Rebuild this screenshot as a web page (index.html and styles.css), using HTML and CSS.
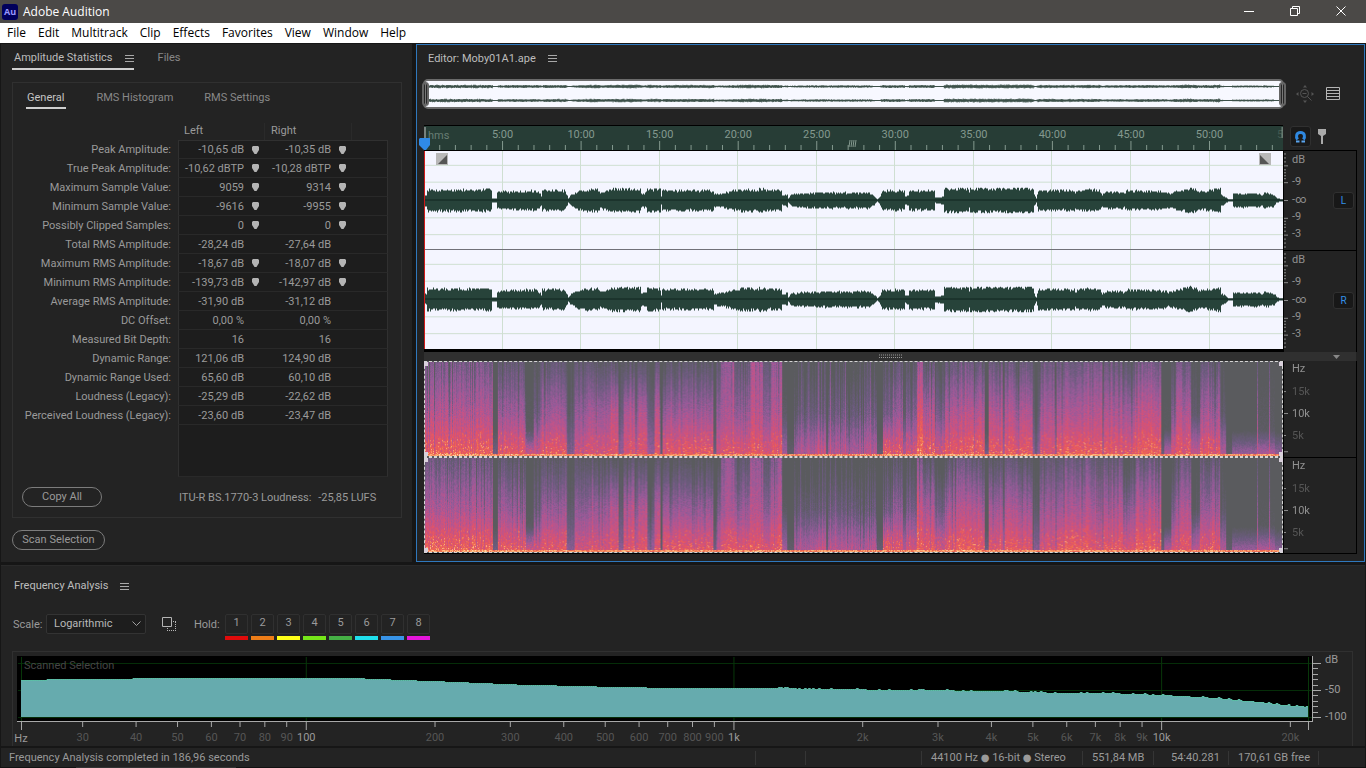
FILE: index.html
```html
<!DOCTYPE html>
<html lang="en">
<head>
<meta charset="utf-8">
<title>Adobe Audition</title>
<link rel="stylesheet" href="styles.css">
</head>
<body>
<div class="app">
  <header class="titlebar">
    <span class="logo">Au</span>
    <h1 class="app-name">Adobe Audition</h1>
    <div class="window-buttons">
      <button class="win" aria-label="Minimize"><svg width="12" height="12"><path d="M1 6.500h10"/></svg></button>
      <button class="win" aria-label="Restore"><svg width="12" height="12"><path d="M1.500 3.500h7v7h-7zM3.500 3.500v-2h7v7h-2"/></svg></button>
      <button class="win" aria-label="Close"><svg width="12" height="12"><path d="M1.500 1.500l9 9M10.500 1.500l-9 9"/></svg></button>
    </div>
  </header>
  <nav class="menubar">
    <button>File</button><button>Edit</button><button>Multitrack</button><button>Clip</button><button>Effects</button><button>Favorites</button><button>View</button><button>Window</button><button>Help</button>
  </nav>

  <main class="workspace">
    <section class="panel stats">
      <div class="tabs">
        <button class="tab active">Amplitude Statistics <svg class="burger" width="9" height="9"><path d="M0 1.500h9M0 4.500h9M0 7.500h9"/></svg></button>
        <button class="tab">Files</button>
      </div>
      <div class="card">
        <div class="subtabs">
          <button class="subtab active">General</button>
          <button class="subtab">RMS Histogram</button>
          <button class="subtab">RMS Settings</button>
        </div>
        <table class="stat-table">
          <thead><tr><td></td><th scope="col">Left</th><th scope="col">Right</th><td></td></tr></thead>
          <tbody id="stat-rows"></tbody>
        </table>
        <div class="card-foot">
          <button class="pill">Copy All</button>
          <p class="lufs">ITU-R BS.1770-3 Loudness: <span>-25,85 LUFS</span></p>
        </div>
      </div>
      <button class="pill scan">Scan Selection</button>
    </section>

    <section class="panel editor">
      <div class="panel-title">Editor: Moby01A1.ape <svg class="burger" width="9" height="9"><path d="M0 1.500h9M0 4.500h9M0 7.500h9"/></svg></div>
      <div class="editor-row overview-row">
        <div class="overview">
          <svg id="overview" viewBox="0 0 859 26" preserveAspectRatio="none"></svg>
          <i class="handle start"></i><i class="handle end"></i>
        </div>
        <div class="overview-tools">
          <svg width="18" height="18" class="zoomout"><circle cx="8.500" cy="8.500" r="4"/><path d="M6.500 8.500h4M11.500 11.500l4 4"/><path class="solid" d="M9 0l2 2.500H7zM9 18l2-2.500H7zM0 9l2.500-2v4zM18 9l-2.500-2v4z"/></svg>
          <svg width="15" height="14" class="listicon"><path d="M.5.5h13v12H.500zM.5 3.500h13M.5 6.500h13M.5 9.500h13"/></svg>
        </div>
      </div>
      <div class="editor-row">
        <div class="ruler">
          <svg id="ruler"></svg>
          <svg class="playhead" width="12" height="12"><path d="M1 0h10v7l-4 5H5L0 7V1z"/></svg>
        </div>
        <div class="ruler-tools">
          <button class="snap" aria-label="Snap"><svg width="13" height="13"><path d="M3.600 9.500C1.800 7 2 2.500 6.500 2.500s4.700 4.500 2.900 7"/><path class="foot" d="M2 11.500h3.500M7.500 11.500H11"/></svg></button>
          <svg width="8" height="15" class="pinicon"><path d="M0 0h8v5L5 7v8H3V7L0 5z"/></svg>
        </div>
      </div>
      <div class="editor-row wave-row">
        <div class="wave">
          <svg id="wave" viewBox="0 0 859 200" preserveAspectRatio="none"></svg>
          <svg class="fade in" width="12" height="12"><path class="tile" d="M0 0h12v12H0z"/><path d="M11 2v9H2z"/></svg>
          <svg class="fade out" width="12" height="12"><path class="tile" d="M0 0h12v12H0z"/><path d="M1 2v9h9z"/></svg>
        </div>
        <div class="scales">
          <div class="channel"><svg class="db-scale"></svg><button class="ch">L</button></div>
          <div class="channel"><svg class="db-scale"></svg><button class="ch">R</button></div>
        </div>
      </div>
      <div class="splitter">
        <svg class="grip" width="24" height="5"><path d="M1 1h23M1 3.500h23"/></svg>
        <svg class="caret" width="7" height="4"><path d="M0 0h7L3.500 4z"/></svg>
      </div>
      <div class="editor-row spectral-row">
        <div class="spectral">
          <div class="selection"><canvas class="spectrum" width="859" height="96"></canvas><i></i><i></i><i></i><i></i></div>
          <div class="selection"><canvas class="spectrum" width="859" height="96"></canvas><i></i><i></i><i></i><i></i></div>
        </div>
        <div class="scales">
          <div class="channel"><svg class="hz-scale"></svg></div>
          <div class="channel"><svg class="hz-scale"></svg></div>
        </div>
      </div>
    </section>
  </main>

  <section class="panel frequency">
    <div class="panel-title">Frequency Analysis <svg class="burger" width="9" height="9"><path d="M0 1.500h9M0 4.500h9M0 7.500h9"/></svg></div>
    <div class="controls">
      <label for="scale">Scale:</label>
      <div class="select-wrap">
        <select id="scale"><option>Logarithmic</option><option>Linear</option></select>
        <svg class="chevron" width="9" height="6"><path d="M.5.500l4 4 4-4"/></svg>
      </div>
      <button class="copy" aria-label="Copy graph"><svg width="15" height="15"><path d="M.5.500h9v9H.500z"/><path class="dots" d="M11 4.500h3M13.500 5v9M5 13.500h9M5.500 11v3"/></svg></button>
      <span class="hold-label">Hold:</span>
      <div class="holds">
        <button class="hold red">1</button><button class="hold orange">2</button><button class="hold yellow">3</button><button class="hold lime">4</button><button class="hold green">5</button><button class="hold cyan">6</button><button class="hold blue">7</button><button class="hold pink">8</button>
      </div>
    </div>
    <div class="graph-box">
      <div class="graph">
        <svg id="freq" viewBox="0 0 1296 65" preserveAspectRatio="none"></svg>
        <span class="scan-label">Scanned Selection</span>
      </div>
      <svg id="freq-db"></svg>
      <svg id="freq-axis"></svg>
    </div>
  </section>

  <footer class="statusbar">
    <span class="message">Frequency Analysis completed in 186,96 seconds</span>
    <span class="cell c-empty"></span>
    <span class="cell c-empty2"></span>
    <span class="cell c-format">44100 Hz <b>●</b> 16-bit <b>●</b> Stereo</span>
    <span class="cell c-size">551,84 MB</span>
    <span class="cell c-time">54:40.281</span>
    <span class="cell c-free">170,61 GB free</span>
    <span class="cell c-end"></span>
  </footer>
  <div class="taskbar-edge"></div>
</div>
<script src="script.js"></script>
</body>
</html>
```
FILE: styles.css
```css
* { box-sizing: border-box; }
body {
  margin: 0;
  background: #161616;
  color: #9a9a9a;
  font: 11px/16px Roboto, "Noto Sans", sans-serif;
}
button { margin: 0; padding: 0; border: 0; background: none; color: inherit; font: inherit; }
svg { display: block; overflow: hidden; }
svg text { font: 11px Roboto, "Noto Sans", sans-serif; }
.app { min-height: 100vh; display: flex; flex-direction: column; }

.titlebar { display: flex; align-items: center; height: 23px; padding: 0 2px; background: #4b4947; color: #fff; }
.logo {
  width: 16px; height: 16px; border-radius: 3px; background: #00005b; color: #9999ff;
  font: bold 9px/15px "Open Sans", sans-serif; text-align: center;
}
.app-name { margin: 0 auto 0 5px; font: 12px/16px "Open Sans", sans-serif; }
.window-buttons { display: flex; }
.win { width: 46px; height: 23px; display: grid; place-items: center; padding-bottom: 2px; }
.win svg { fill: none; stroke: #fff; }
.menubar { display: flex; height: 20px; padding-left: 1px; background: #fff; color: #000; font: 12px/20px "Open Sans", sans-serif; }
.menubar button { padding: 0 6px; }

.workspace { flex: 1; display: grid; grid-template-columns: 411px 1fr; gap: 4px; padding: 1px 1px 3px; }
.panel { background: #232323; }
.burger { stroke: #a8a8a8; fill: none; }

.stats { padding: 0 11px 12px; display: flex; flex-direction: column; align-items: flex-start; }
.tabs { display: flex; gap: 22px; height: 26px; }
.tab { display: flex; align-items: center; gap: 12px; padding: 4px 0 0 2px; color: #888; border-bottom: 2px solid transparent; }
.tab.active { color: #bdbdbd; border-color: #cfcfcf; }
.card { width: 390px; margin-top: 12px; flex: 1; border: 1px solid #303030; display: flex; flex-direction: column; }
.subtabs { display: flex; gap: 29px; height: 26px; padding-left: 13px; }
.subtab { padding: 5px 1px 0; color: #888; border-bottom: 2px solid transparent; }
.subtab.active { padding-right: 2px; color: #c4c4c4; border-color: #cfcfcf; }
.stat-table { flex: 1; width: 375px; margin-top: 14px; border-spacing: 0; display: block; white-space: nowrap; }
.stat-table td, .stat-table th { padding: 0; font-weight: normal; }
.stat-table th { width: 87px; height: 17px; padding: 0 0 1px 6px; line-height: 16px; text-align: left; border-right: 1px solid #2a2a2a; }
.stat-table thead td:first-child { width: 165px; }
.stat-table thead td:last-child { width: 36px; }
.stat-table tbody td { height: 19px; padding-top: 1px; background: #1d1d1d; border-bottom: 1px solid #292929; }
.stat-table tbody tr:first-child td { border-top: 1px solid #303030; height: 19px; }
.stat-table tbody th { height: 19px; padding: 1px 7px 0 0; text-align: right; border: 0; }
.stat-table tbody td:nth-child(2) { border-left: 1px solid #303030; }
.stat-table tbody td:last-child { border-right: 1px solid #303030; }
.stat-table tbody tr.filler td { height: 52px; }
.value { display: flex; align-items: center; justify-content: flex-end; gap: 8px; padding-right: 6px; }
.value svg { width: 7px; fill: #b4b4b4; }
.card-foot { display: flex; gap: 77px; height: 40px; padding: 10px 0 0 9px; align-items: flex-start; }
.pill { height: 20px; border: 1px solid #7c7c7c; border-radius: 10px; color: #9a9a9a; line-height: 18px; width: 80px; }
.scan { width: 93px; margin-top: 12px; }
.lufs { margin: 3px 0 0; }
.lufs span { padding-left: 4px; }

.editor { border: 1px solid #2f78bd; padding: 0 7px 7px; display: flex; flex-direction: column; min-width: 0; }
.panel-title { display: flex; align-items: center; gap: 12px; color: #bdbdbd; }
.editor .panel-title { height: 27px; padding-left: 4px; }
.editor-row { display: grid; grid-template-columns: minmax(0, 1fr) 74px; }
.overview-row { margin: 7px 0 16px; height: 30px; }
.overview { position: relative; margin: 0 -1px; border: 2px solid #6b6b6b; border-radius: 5px; background: #f7f8ff; }
#overview { width: 100%; height: 26px; }
.handle { position: absolute; top: 1px; width: 7px; height: 24px; border: 2px solid #656565; border-radius: 4px; background: #262626 linear-gradient(#777, #777) center / 1px 100% no-repeat; }
.handle.start { left: -3px; }
.handle.end { right: -4px; }
.overview-tools { display: flex; gap: 12px; align-items: center; padding-left: 13px; }
.zoomout { fill: none; stroke: #555; stroke-width: 1px; }
.zoomout .solid { fill: #555; stroke: none; }
.listicon { fill: none; stroke: #b5b5b5; }
.ruler { position: relative; height: 26px; background: #273d36; border: 1px solid #000; border-width: 1px 0 1px; }
#ruler { width: 100%; height: 24px; }
#ruler text { fill: #84998f; }
#ruler line { stroke: #84998f; }
.playhead { position: absolute; left: -5px; top: 12px; z-index: 1; fill: #2f8ae8; }
.ruler-tools { display: flex; gap: 7px; align-items: flex-start; padding: 1px 0 0 7px; border-bottom: 1px solid #000; }
.snap { width: 21px; height: 21px; border: 1px solid #303030; border-radius: 3px; background: #191919; display: grid; place-items: center; }
.snap svg { fill: none; stroke: #2f88e0; stroke-width: 3px; }
.snap .foot { stroke: #5aa5f0; stroke-width: 2px; }
.pinicon { fill: #aaa; margin-top: 3px; }
.wave-row { flex: 1 1 192px; min-height: 180px; }
.wave { position: relative; min-height: 0; border-bottom: 3px solid #000; background: #f4f5ff; }
#wave { width: 100%; height: 100%; position: absolute; }
.fade { position: absolute; top: 2px; fill: #555; }
.fade .tile { fill: #b8b8b8; }
.fade.in { left: 12px; }
.fade.out { right: 12px; }
.scales { display: flex; flex-direction: column; border-right: 1px solid #000; border-left: 1px solid #000; min-height: 0; }
.wave-row .scales { padding-bottom: 2px; }
.channel { flex: 1; min-height: 0; display: flex; align-items: center; justify-content: flex-end; padding-right: 2px; position: relative; }
.channel + .channel { border-top: 1px solid #000; }
.db-scale, .hz-scale { position: absolute; inset: 0; width: 100%; height: 100%; }
.scales line { stroke: #8c8c8c; }
.scales text { fill: #909090; }
.scales text.dim { fill: #555; }
.ch { position: relative; width: 21px; height: 17px; border: 1px solid #303030; border-radius: 3px; background: #181818; color: #3390e8; font-size: 10px; line-height: 15px; }
.splitter { height: 9px; margin-right: 1px; background: #303030; display: grid; grid-template-columns: 1fr 24px 1fr; align-items: center; }
.grip { grid-column: 2; stroke: #999; stroke-dasharray: 1 1; }
.caret { fill: #888; justify-self: end; margin-right: 16px; }
.spectral-row { flex: 1 1 184px; min-height: 170px; border-bottom: 1px solid #000; }
.spectral { display: flex; flex-direction: column; min-width: 0; }
.selection { position: relative; flex: 1; min-height: 0; border: 1px dashed #d5d5d5; background: #5a5b5e; }
.spectrum { position: absolute; width: 100%; height: 100%; }
.selection i { position: absolute; width: 4px; height: 4px; background: #d9d0dc; }
.selection i:nth-of-type(1) { left: -1px; top: 0; }
.selection i:nth-of-type(2) { right: -1px; top: 0; }
.selection i:nth-of-type(3) { left: -1px; bottom: 0; }
.selection i:nth-of-type(4) { right: -1px; bottom: 0; }

.frequency { margin: 0 1px; padding: 0 12px 0 11px; border-top: 1px solid #2a2a2a; }
.frequency .panel-title { height: 40px; padding-left: 2px; }
.controls { display: flex; align-items: flex-start; height: 45px; padding-top: 8px; }
.controls label { width: 34px; padding: 3px 0 0 1px; }
.select-wrap { position: relative; }
.select-wrap select {
  appearance: none; width: 100px; height: 20px; padding: 0 7px; border: 1px solid #333; border-radius: 2px;
  background: #1d1d1d; color: #b8b8b8; font: inherit;
}
.chevron { position: absolute; right: 5px; top: 7px; fill: none; stroke: #a0a0a0; pointer-events: none; }
.copy { margin: 3px 17px 0 16px; }
.copy svg { fill: none; stroke: #b5b5b5; }
.copy .dots { stroke-dasharray: 1 1; }
.hold-label { width: 31px; padding-top: 3px; }
.holds { display: flex; gap: 3px; }
.hold { width: 23px; height: 26px; padding-bottom: 4px; border-bottom: 4px solid; position: relative; color: #9a9a9a; line-height: 18px; }
.hold::before { content: ""; position: absolute; inset: 0 0 2px; border: 1px solid #303030; border-radius: 2px; }
.hold.red { border-color: #e00b0b; } .hold.orange { border-color: #ee7d18; } .hold.yellow { border-color: #ffff18; }
.hold.lime { border-color: #76e619; } .hold.green { border-color: #45b045; } .hold.cyan { border-color: #20dfec; }
.hold.blue { border-color: #3894e8; } .hold.pink { border-color: #e616dc; }
.graph-box {
  display: grid; grid-template-columns: minmax(0, 1fr) 39px; grid-template-rows: 66px 24px;
  border: 1px solid #303030; border-bottom: 0; padding: 4px 0 0 4px;
}
.graph { position: relative; background: #000; border: 1px solid #a8a8a8; border-width: 0 1px 1px 0; }
#freq { width: 100%; height: 65px; }
.scan-label { position: absolute; left: 7px; top: 2px; color: #454545; }
#freq-db { width: 39px; height: 66px; overflow: visible; }
#freq-axis { width: 100%; height: 24px; overflow: visible; }
#freq-db text, #freq-axis text { fill: #9a9a9a; }
#freq-axis text.dim { fill: #565656; }
#freq-db line, #freq-axis line { stroke: #a8a8a8; }

.statusbar { display: flex; height: 21px; margin: 0 1px; border-top: 2px solid #161616; background: #232323; align-items: center; padding-left: 8px; }
.message { flex: 1; }
.cell { height: 14px; line-height: 14px; border-left: 1px solid #353535; white-space: nowrap; padding-left: 9px; }
.cell b { font: 10px/12px "DejaVu Sans", sans-serif; }
.c-empty { width: 50px; } .c-empty2 { width: 116px; } .c-format { width: 161px; } .c-size { width: 71px; }
.c-time { width: 75px; padding-left: 17px; } .c-free { width: 90px; } .c-end { width: 47px; }
.taskbar-edge { height: 2px; background: linear-gradient(90deg, #111 76px, #333 76px, #333 236px, #111 236px); }
```
FILE: script.js
```js
const NS = 'http://www.w3.org/2000/svg';
const byId = id => document.getElementById(id);
function add(parent, name, attrs, text) {
  const node = document.createElementNS(NS, name);
  for (const key in attrs) node.setAttribute(key, attrs[key]);
  if (text !== undefined) node.textContent = text;
  parent.appendChild(node);
  return node;
}
let seed = 7;
function random() {
  seed = (seed * 1664525 + 1013904223) % 4294967296;
  return seed / 4294967296;
}

// Statistics rows: label, left, right, has marker
const stats = [
  ['Peak Amplitude', '-10,65 dB', '-10,35 dB', 1],
  ['True Peak Amplitude', '-10,62 dBTP', '-10,28 dBTP', 1],
  ['Maximum Sample Value', '9059', '9314', 1],
  ['Minimum Sample Value', '-9616', '-9955', 1],
  ['Possibly Clipped Samples', '0', '0', 1],
  ['Total RMS Amplitude', '-28,24 dB', '-27,64 dB', 0],
  ['Maximum RMS Amplitude', '-18,67 dB', '-18,07 dB', 1],
  ['Minimum RMS Amplitude', '-139,73 dB', '-142,97 dB', 1],
  ['Average RMS Amplitude', '-31,90 dB', '-31,12 dB', 0],
  ['DC Offset', '0,00 %', '0,00 %', 0],
  ['Measured Bit Depth', '16', '16', 0],
  ['Dynamic Range', '121,06 dB', '124,90 dB', 0],
  ['Dynamic Range Used', '65,60 dB', '60,10 dB', 0],
  ['Loudness (Legacy)', '-25,29 dB', '-22,62 dB', 0],
  ['Perceived Loudness (Legacy)', '-23,60 dB', '-23,47 dB', 0]
];
const cell = (value, marker) => `<td><div class="value">${value}<svg height="9" viewBox="0 0 7 9">${marker ? '<path d="M1 0h5l1 1v3L4.500 8h-2L0 4V1z"/>' : ''}</svg></div></td>`;
byId('stat-rows').innerHTML = stats.map(([name, left, right, marker]) =>
  `<tr><th scope="row">${name}:</th>${cell(left, marker)}${cell(right, marker)}<td></td></tr>`).join('') +
  '<tr class="filler"><th></th><td></td><td></td><td></td></tr>';

// Amplitude envelope: position and level at each breakpoint
const envelope = [
  [0, 5], [2, 6], [3, 11], [67, 11], [68, 2], [72, 2], [73, 9], [112, 10], [115, 8], [117, 5], [118, 10], [140, 10.5], [143, 5], [144, 2],
  [146, 5], [153, 9], [166, 11.5], [174, 11.5], [176, 8], [188, 12], [216, 12], [217, 7], [222, 8], [223, 11.5], [236, 11.5], [237, 4], [238, 10.5],
  [289, 10.5], [290, 6], [302, 8], [308, 10], [322, 12], [334, 10.5], [335, 12.500], [345, 10.5], [357, 10.5], [358, 5], [363, 7], [364, 2], [367, 6], [378, 7.5],
  [405, 8], [445, 8], [451, 4], [453, 1], [456, 5], [458, 10], [480, 10], [481, 4], [484, 5], [485, 10], [510, 10], [511, 3], [519, 4], [520, 12.500],
  [544, 12.5], [545, 9], [546, 12.500], [609, 12.500], [610, 6], [612, 2], [614, 10.5], [650, 10.5], [651, 8], [655, 10.5], [675, 11], [678, 6],
  [682, 8.5], [697, 9], [700, 7], [702, 10], [736, 9.5], [745, 7.5], [754, 10], [765, 13], [773, 11], [775, 9], [789, 11], [796, 13],
  [797, 6], [801, 4], [804, 1], [808, 1], [809, 7], [835, 7], [838, 5], [840, 8], [850, 6], [852, 3], [856, 1], [859, 0.500]
];
function level(x) {
  let i = 1;
  while (i < envelope.length - 1 && envelope[i][0] < x) i++;
  const [x0, a] = envelope[i - 1], [x1, b] = envelope[i];
  return a + (b - a) * (x - x0) / (x1 - x0);
}
function wavePath(center, scale, jitter, snap) {
  let top = '', bottom = '';
  for (let x = 0; x < 859; x++) {
    const a = level(x) * scale;
    const up = snap(a * (1 - jitter + random() * jitter * 1.4));
    const down = snap(a * (1 - jitter + random() * jitter * 1.4));
    top += `${x ? 'L' : 'M'}${x} ${center - up}H${x + 1}`;
    bottom = `L${x + 1} ${center + down}H${x}` + bottom;
  }
  return top + bottom + 'Z';
}
const wave = byId('wave');
for (let k = 1; k <= 10; k++) add(wave, 'path', { d: `M${Math.round(78.55 * k) - .5} 0V200`, stroke: '#cfdfd2' });
for (const y of [15, 32, 68, 85, 115, 132, 168, 185]) add(wave, 'path', { d: `M0 ${y - .5}H859`, stroke: '#cfdfd2' });
for (const y of [50, 150]) {
  add(wave, 'path', { d: wavePath(y, 1, .2, Math.round), fill: '#27433a' });
  add(wave, 'path', { d: `M0 ${y - .5}H859`, stroke: '#10251e' });
}
add(wave, 'path', { d: 'M0 99.500H859', stroke: '#707078' });
add(wave, 'path', { d: 'M.5 0V200', stroke: '#d01818' });
const overview = byId('overview');
for (const y of [5.5, 19.5]) {
  add(overview, 'path', { d: wavePath(y, .14, .35, v => v > .6 ? v : .3), fill: '#4d605a' });
  add(overview, 'path', { d: `M0 ${y}H859`, stroke: '#3c5049' });
}

// Time ruler
const ruler = byId('ruler');
const pct = (x, w) => (x / w * 100) + '%';
for (let k = 0; k < 55; k++) {
  const x = pct(15.71 * k, 859);
  add(ruler, 'line', { x1: x, x2: x, y1: k % 5 ? 19 : 15, y2: 24 });
  if (k && k % 5 === 0) add(ruler, 'text', { x, y: 12, 'text-anchor': 'middle' }, k + ':00');
}
add(ruler, 'text', { x: 4, y: 13, opacity: .7 }, 'hms');
add(ruler, 'text', { x: '99.3%', y: 12, opacity: .3 }, '5');
add(ruler, 'path', { d: 'M1 1V12', stroke: '#c8c8c8' });
add(ruler, 'line', { x1: '99.9%', x2: '99.9%', y1: 1, y2: 12 });
for (let k = 0; k < 4; k++) add(ruler, 'line', { x1: pct(426 + 2 * k, 859), x2: pct(425 + 2 * k, 859), y1: 14, y2: 21 });

// Vertical scales
document.querySelectorAll('.db-scale').forEach(svg => {
  for (const y of [3, 7, 11, 15, 19, 22, 25, 28, 32, 68, 71, 74, 77, 81, 85, 89, 93, 97])
    add(svg, 'line', { x1: 0, x2: [15, 32, 68, 85].includes(y) ? 4 : 2, y1: y + '%', y2: y + '%' });
  add(svg, 'line', { x1: 0, x2: 4, y1: '50%', y2: '50%' });
  [['dB', 12], ['-9', 34], ['-∞', 53], ['-9', 70], ['-3', 87]].forEach(([t, y]) => add(svg, 'text', { x: 8, y: y + '%' }, t));
});
document.querySelectorAll('.hz-scale').forEach(svg => {
  [['Hz', 11, 0], ['15k', 36, 1], ['10k', 59, 0], ['5k', 82, 1]].forEach(([t, y, dim]) => add(svg, 'text', { x: 8, y: y + '%', class: dim ? 'dim' : '' }, t));
  for (const [y, w] of [[32, 2], [55, 4], [78, 2], [95, 4]]) add(svg, 'line', { x1: 0, x2: w, y1: y + '%', y2: y + '%' });
});

// Spectral segments: start, high band, middle band, low band
const bands = [
  [0, .3, .58, .9], [68, 0, .03, .3], [73, .2, .5, .86], [101, 0, .08, .72], [109, .1, .3, .74], [117, .18, .5, .84], [142, .03, .15, .4],
  [150, .17, .45, .72], [164, .2, .56, .78], [172, .12, .5, .74], [186, .15, .64, .8], [194, .03, .2, .45], [199, .16, .62, .8], [210, .08, .4, .72], [214, .15, .62, .82],
  [223, .05, .25, .5], [230, .2, .62, .82], [236, 0, 0, .2], [238, .12, .5, .84], [289, 0, .08, .3], [292, .1, .4, .7], [297, .46, .56, .8], [310, .2, .45, .82], [316, .2, .48, .8],
  [326, .5, .62, .84], [339, .2, .42, .76], [347, .46, .62, .84], [358, 0, .1, .55], [363, 0, 0, .15], [370, .03, .22, .6], [391, .03, .2, .68],
  [402, 0, .05, .25], [404, .03, .25, .62], [453, 0, 0, .2], [459, .1, .3, .88], [468, .16, .45, .8], [479, 0, .1, .6], [482, .1, .35, .75], [493, .42, .74, .92], [499, .2, .6, .86], [511, 0, .3, .72],
  [521, .22, .58, .84], [533, .3, .64, .88], [545, .22, .6, .86], [561, 0, .03, .3], [565, .2, .58, .82], [579, 0, .3, .6], [581, .22, .58, .84], [609, 0, .12, .4],
  [616, .25, .54, .76], [632, .1, .3, .5], [633, .28, .58, .88], [662, .32, .6, .84], [679, 0, .2, .5], [680, .28, .6, .86], [699, .1, .48, .8], [712, .3, .64, .88], [738, 0, 0, .25],
  [741, 0, .06, .65], [748, .05, .35, .76], [753, .26, .58, .8], [768, 0, .12, .68], [777, .24, .54, .84], [797, 0, .12, .6], [803, 0, 0, .15], [809, 0, .02, .5], [835, .02, .08, .6], [852, 0, 0, .45]
];
const stops = [[0, 90, 91, 94], [.22, 108, 91, 127], [.42, 151, 91, 154], [.6, 190, 84, 140], [.78, 226, 82, 104], [.92, 240, 106, 78], [1.08, 255, 175, 112], [1.3, 255, 225, 170]];
function colour(v) {
  let i = 1;
  while (i < stops.length - 1 && stops[i][0] < v) i++;
  const a = stops[i - 1], b = stops[i], t = Math.max(0, Math.min(1, (v - a[0]) / (b[0] - a[0])));
  return [1, 2, 3].map(k => a[k] + (b[k] - a[k]) * t);
}
document.querySelectorAll('.spectrum').forEach((canvas, channel) => {
  const ctx = canvas.getContext('2d');
  const image = ctx.createImageData(859, 96);
  for (let x = 0; x < 859; x++) {
    let i = bands.length - 1;
    while (bands[i][0] > x) i--;
    let [, high, mid, low] = bands[i];
    const spike = random() < .1 ? -.24 : 0;
    let column = high + mid > .1 ? (random() - .5) * .22 + spike : 0;
    if (x > 370 && x < 450 && random() < .15) column += .22;
    if (x === 834 || x === 846 || x === 780) { high = .25; mid = .45; low = .7; }
    const knee = mid < .1 ? .72 : .55;
    for (let y = 0; y < 96; y++) {
      const f = y / 95;
      let v = f < knee ? high + (mid - high) * f / knee : mid + (low - mid) * (f - knee) / (1 - knee);
      v += column * (1 - f * .5) + (random() - .5) * (.06 + v * .2) - .04 - channel * .05 * (1 - f);
      if (f > .75 && low > .7 && random() < .12 * (f - .65) * 4) v += .2;
      if (f > .985) v = Math.max(v, .85) + random() * .3;
      const rgb = colour(v), p = (y * 859 + x) * 4;
      image.data[p] = rgb[0]; image.data[p + 1] = rgb[1]; image.data[p + 2] = rgb[2]; image.data[p + 3] = 255;
    }
  }
  ctx.putImageData(image, 0, 0);
});

// Frequency analysis graph
const freq = byId('freq');
const curve = [[4, 24], [54, 23], [175, 22], [335, 22], [385, 24], [440, 26], [500, 28.500], [580, 30.500], [630, 31.500], [735, 31.500], [800, 33], [890, 34], [985, 35], [1040, 37], [1090, 37], [1145, 39], [1200, 42], [1240, 46], [1292, 51.500]];
let line = '';
for (let x = 4, i = 1; x < 1292; x += 2) {
  while (curve[i][0] < x) i++;
  const [x0, a] = curve[i - 1], [x1, b] = curve[i];
  let y = Math.round(a + (b - a) * (x - x0) / (x1 - x0));
  if (x > 760 && random() < .2) y -= 1;
  line += `${x === 4 ? 'M' : 'L'}${x} ${y + .5}H${x + 2}`;
}
for (const y of [7, 34, 61]) add(freq, 'path', { d: `M1 ${y + .5}H1296`, stroke: 'rgb(5,45,8)' });
for (const x of [4, 289, 717, 1145, 1292]) add(freq, 'path', { d: `M${x + .5} 1V65`, stroke: 'rgb(8,55,10)' });
add(freq, 'path', { d: line + 'V61H4Z', fill: '#66abae' });
add(freq, 'path', { d: line, fill: 'none', stroke: '#5ebfa9' });

const axis = byId('freq-axis');
const axisLabels = ['30', '40', '50', '60', '70', '80', '90', '100', '200', '300', '400', '500', '600', '700', '800', '900', '1k', '2k', '3k', '4k', '5k', '6k', '7k', '8k', '9k', '10k', '20k'];
for (const label of axisLabels) {
  const hz = parseInt(label, 10) * (label.endsWith('k') ? 1000 : 1);
  const major = label === '100' || label === '1k' || label === '10k';
  const x = pct(289.5 + 428 * Math.log10(hz / 100), 1297);
  add(axis, 'line', { x1: x, x2: x, y1: 0, y2: major ? 8 : 5 });
  add(axis, 'text', { x, y: 19, 'text-anchor': 'middle', class: major ? '' : 'dim' }, label);
}
for (const x of [4.5, 1292.5]) add(axis, 'line', { x1: pct(x, 1297), x2: pct(x, 1297), y1: 0, y2: 8 });
add(axis, 'text', { x: 4, y: 20, 'text-anchor': 'middle' }, 'Hz');
const db = byId('freq-db');
for (let k = 0; k <= 10; k++) {
  const y = 7.5 + Math.round(k * 5.4);
  add(db, 'line', { x1: 0, x2: k % 5 ? 5 : 8, y1: y, y2: y });
}
[['dB', 7], ['-50', 37], ['-100', 64]].forEach(([t, y]) => add(db, 'text', { x: 12, y }, t));
```
